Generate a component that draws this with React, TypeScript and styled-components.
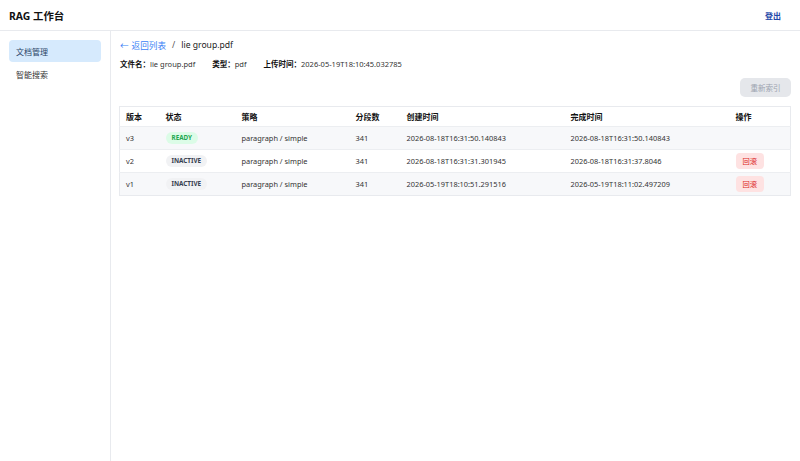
import React from 'react';
import styled, { createGlobalStyle } from 'styled-components';

const GlobalStyle = createGlobalStyle`
  html, body {
    margin: 0;
    padding: 0;
    height: 100%;
    background: #ffffff;
  }
  #root {
    height: 100%;
  }
  * {
    box-sizing: border-box;
  }
  body {
    font-family: 'Noto Sans', 'Noto Sans CJK SC', sans-serif;
    color: #333;
  }
`;

const StyledPage = styled.div`
  display: flex;
  flex-direction: column;
  height: 100%;
`;

const StyledHeader = styled.header`
  display: flex;
  align-items: center;
  justify-content: space-between;
  height: 31px;
  padding: 0 12px 0 9px;
  border-bottom: 1px solid #e8eaee;
  flex-shrink: 0;
`;

const StyledTitle = styled.h1`
  margin: 0;
  font-size: 10.4px;
  font-weight: 700;
  color: #111;
`;

const StyledLogout = styled.button`
  border: none;
  background: none;
  padding: 0 7px;
  font-family: inherit;
  font-size: 8px;
  font-weight: 700;
  color: #1e48a8;
  cursor: pointer;
`;

const StyledBody = styled.div`
  display: flex;
  flex: 1;
  min-height: 0;
`;

const StyledSidebar = styled.nav`
  width: 111px;
  flex-shrink: 0;
  padding: 9px 9px;
  border-right: 1px solid #e8eaee;
  display: flex;
  flex-direction: column;
  gap: 1px;
`;

const StyledNavItem = styled.div<{ $active?: boolean }>`
  height: 22px;
  display: flex;
  align-items: center;
  padding: 0 7px;
  border-radius: 4px;
  font-size: 8px;
  background: ${({ $active }) => ($active ? '#d6eafd' : 'transparent')};
  color: ${({ $active }) => ($active ? '#2a4466' : '#333')};
`;

const StyledMain = styled.main`
  flex: 1;
  padding: 8px 9px 9px 8px;
  min-width: 0;
`;

const StyledCrumbs = styled.div`
  display: flex;
  align-items: center;
  gap: 6px;
  height: 12px;
  font-size: 8.6px;
  padding-left: 1px;
  color: #222;
`;

const StyledBackLink = styled.a`
  display: flex;
  gap: 3px;
  color: #3b82f6;
  text-decoration: none;
`;

const StyledSlash = styled.span`
  color: #555;
`;

const StyledMeta = styled.div`
  display: flex;
  gap: 17px;
  margin-top: 7px;
  padding-left: 1px;
  font-size: 7.5px;
  color: #333;
`;

const StyledLabel = styled.b`
  color: #111;
  font-weight: 700;
`;

const StyledToolbar = styled.div`
  display: flex;
  justify-content: flex-end;
  margin-top: 9px;
`;

const StyledReindex = styled.button`
  width: 51px;
  height: 19px;
  border: none;
  border-radius: 5px;
  background: #e5e7eb;
  color: #9ca3af;
  font-family: inherit;
  font-size: 7.5px;
  cursor: not-allowed;
`;

const StyledTable = styled.table`
  width: 100%;
  margin-top: 9px;
  border-collapse: collapse;
  table-layout: fixed;
  border: 1px solid #e8eaee;
  font-size: 7.4px;
`;

const StyledTh = styled.th`
  height: 20px;
  padding: 0 6px;
  text-align: left;
  font-size: 8px;
  font-weight: 700;
  color: #111;
  background: #fff;
`;

const StyledRow = styled.tr<{ $striped?: boolean }>`
  height: 23px;
  background: ${({ $striped }) => ($striped ? '#f7f8fa' : '#ffffff')};
  border-top: 1px solid #eceef1;
`;

const StyledTd = styled.td`
  padding: 0 6px;
  color: #333;
  white-space: nowrap;
`;

const StyledBadge = styled.span<{ $ready?: boolean }>`
  display: inline-block;
  padding: 2px 6px;
  border-radius: 6px;
  font-size: 6.3px;
  font-weight: 700;
  line-height: 8px;
  background: ${({ $ready }) => ($ready ? '#dcfce7' : '#f1f2f4')};
  color: ${({ $ready }) => ($ready ? '#22a652' : '#374151')};
`;

const StyledRollback = styled.button`
  height: 16px;
  padding: 0 7px;
  border: none;
  border-radius: 4px;
  background: #fee2e2;
  color: #dc2626;
  font-family: inherit;
  font-size: 7.3px;
  cursor: pointer;
`;

const COLUMNS = [
  { title: '版本', width: 40 },
  { title: '状态', width: 76 },
  { title: '策略', width: 114 },
  { title: '分段数', width: 51 },
  { title: '创建时间', width: 164 },
  { title: '完成时间', width: 165 },
  { title: '操作' },
];

const VERSIONS = [
  {
    version: 'v3',
    status: 'READY',
    strategy: 'paragraph / simple',
    chunks: 341,
    created: '2026-08-18T16:31:50.140843',
    finished: '2026-08-18T16:31:50.140843',
  },
  {
    version: 'v2',
    status: 'INACTIVE',
    strategy: 'paragraph / simple',
    chunks: 341,
    created: '2026-08-18T16:31:31.301945',
    finished: '2026-08-18T16:31:37.8046',
  },
  {
    version: 'v1',
    status: 'INACTIVE',
    strategy: 'paragraph / simple',
    chunks: 341,
    created: '2026-05-19T18:10:51.291516',
    finished: '2026-05-19T18:11:02.497209',
  },
];

const App = () => {
  return (
    <>
      <GlobalStyle />
      <StyledPage>
        <StyledHeader>
          <StyledTitle>RAG 工作台</StyledTitle>
          <StyledLogout>登出</StyledLogout>
        </StyledHeader>
        <StyledBody>
          <StyledSidebar>
            <StyledNavItem $active>文档管理</StyledNavItem>
            <StyledNavItem>智能搜索</StyledNavItem>
          </StyledSidebar>
          <StyledMain>
            <StyledCrumbs>
              <StyledBackLink href="#">
                <span>←</span>
                <span>返回列表</span>
              </StyledBackLink>
              <StyledSlash>/</StyledSlash>
              <span>lie group.pdf</span>
            </StyledCrumbs>
            <StyledMeta>
              <span>
                <StyledLabel>文件名：</StyledLabel>lie group.pdf
              </span>
              <span>
                <StyledLabel>类型：</StyledLabel>pdf
              </span>
              <span>
                <StyledLabel>上传时间：</StyledLabel>2026-05-19T18:10:45.032785
              </span>
            </StyledMeta>
            <StyledToolbar>
              <StyledReindex disabled>重新索引</StyledReindex>
            </StyledToolbar>
            <StyledTable>
              <colgroup>
                {COLUMNS.map(({ title, width }) => (
                  <col key={title} style={width ? { width } : undefined} />
                ))}
              </colgroup>
              <thead>
                <tr>
                  {COLUMNS.map(({ title }) => (
                    <StyledTh key={title}>{title}</StyledTh>
                  ))}
                </tr>
              </thead>
              <tbody>
                {VERSIONS.map((row, i) => (
                  <StyledRow key={row.version} $striped={i % 2 === 0}>
                    <StyledTd>{row.version}</StyledTd>
                    <StyledTd>
                      <StyledBadge $ready={row.status === 'READY'}>{row.status}</StyledBadge>
                    </StyledTd>
                    <StyledTd>{row.strategy}</StyledTd>
                    <StyledTd>{row.chunks}</StyledTd>
                    <StyledTd>{row.created}</StyledTd>
                    <StyledTd>{row.finished}</StyledTd>
                    <StyledTd>{row.status !== 'READY' && <StyledRollback>回滚</StyledRollback>}</StyledTd>
                  </StyledRow>
                ))}
              </tbody>
            </StyledTable>
          </StyledMain>
        </StyledBody>
      </StyledPage>
    </>
  );
};

export default App;
